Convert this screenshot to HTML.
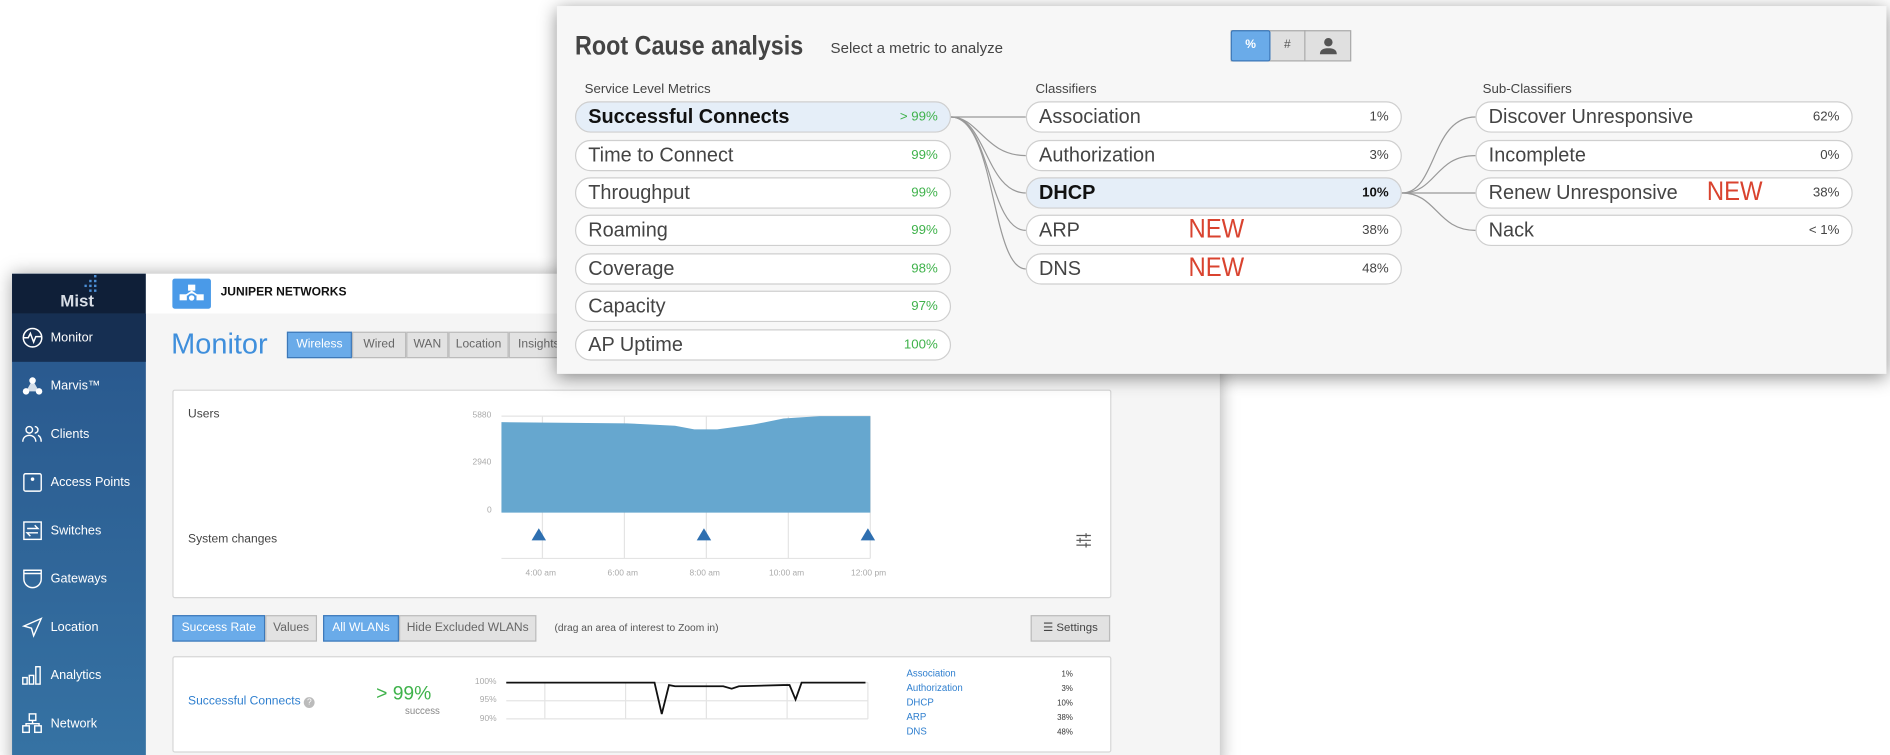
<!DOCTYPE html>
<html><head><meta charset="utf-8"><style>
*{box-sizing:border-box;margin:0;padding:0}
html,body{width:1890px;height:755px;overflow:hidden;background:#fff;font-family:"Liberation Sans","DejaVu Sans",sans-serif}
#w{position:absolute;left:0;top:0;width:1568px;height:626px;transform:scale(1.2054,1.2061);transform-origin:0 0;overflow:hidden}
.a{position:absolute}
#back{left:10px;top:227px;width:1002px;height:410px;background:#f5f5f5;box-shadow:0 0 14px rgba(0,0,0,.35)}
#side{left:0;top:0;width:111px;height:410px;background:linear-gradient(#27548a,#3673a4)}
.nav{position:absolute;left:0;width:111px;height:40px;color:#fff;font-size:10.5px;display:flex;align-items:center;padding-left:8px}
.nav svg{width:18px;height:18px;margin-right:6px;flex:none}
.tab{position:absolute;top:48px;height:22px;border:1px solid #bbb;background:#e2e2e2;color:#666;font-size:10px;line-height:20px;text-align:center}
.btn{position:absolute;height:22px;border:1px solid #bbb;background:#e2e2e2;color:#666;font-size:10px;line-height:20px;text-align:center}
.on{background:#6aabe9;color:#fff;border-color:#3d78b8}
.card{position:absolute;background:#fff;border:1px solid #d6d6d6;border-radius:2px}
.gl{font-size:7px;color:#aaa;position:absolute}
#pop{left:462px;top:5px;width:1103px;height:305px;background:#f7f7f7;box-shadow:0 3px 14px rgba(0,0,0,.45)}
.pill{position:absolute;height:26px;width:312px;border:1px solid #cfcfcf;border-radius:13px;background:#fff;font-size:16.5px;color:#444;line-height:24px;padding-left:10px}
.pill b{font-weight:bold;color:#111}
.pill span{position:absolute;right:10px;top:0;font-size:11px;color:#444}
.pill span.g{color:#3fb24b}
.hl{background:#e5eef8}
.new{position:absolute;color:#d9432f;font-size:22px;font-weight:normal;top:-1px;transform:scaleX(.9);transform-origin:0 0}
.hd{position:absolute;top:63px;font-size:11px;color:#444}
</style></head><body><div id="w">

<div class="a" id="back">
 <div class="a" id="side">
  <div class="a" style="left:0;top:0;width:111px;height:33px;background:#0f1f38"></div>
  <div class="a" style="left:0;top:33px;width:111px;height:40px;background:#162f52"></div>
  <div class="a" style="left:40px;top:14px;color:#d8dde5;font-weight:bold;font-size:14px">Mist</div>
  <svg class="a" style="left:60px;top:1px" width="12" height="18"><g fill="#4c8fd6"><rect x="8" y="0" width="2" height="2"/><rect x="8" y="4" width="2" height="2"/><rect x="4" y="4" width="2" height="2"/><rect x="8" y="8" width="2" height="2"/><rect x="4" y="8" width="2" height="2"/><rect x="0" y="8" width="2" height="2"/><rect x="8" y="12" width="2" height="2"/><rect x="4" y="12" width="2" height="2"/></g></svg>
  <div class="nav" style="top:33px"><svg viewBox="0 0 20 20" fill="none" stroke="#fff" stroke-width="1.4"><circle cx="10" cy="10" r="8.5"/><path d="M2 10h4l2-4 3 8 2-5h5"/></svg>Monitor</div>
  <div class="nav" style="top:73px"><svg viewBox="0 0 20 20" fill="#fff"><circle cx="10" cy="5" r="3"/><circle cx="4" cy="15" r="3"/><circle cx="16" cy="15" r="3"/><path d="M9 6l-5 9h12l-5-9z" opacity=".8"/></svg>Marvis™</div>
  <div class="nav" style="top:113px"><svg viewBox="0 0 20 20" fill="none" stroke="#fff" stroke-width="1.3"><circle cx="7" cy="6" r="3"/><path d="M1 17c0-4 3-6 6-6s6 2 6 6M12 3a3 3 0 010 6M15 11c2 1 3 3 3 6"/></svg>Clients</div>
  <div class="nav" style="top:153px"><svg viewBox="0 0 20 20" fill="none" stroke="#fff" stroke-width="1.3"><rect x="2" y="2" width="16" height="16" rx="1.5"/><circle cx="10" cy="7" r="1" fill="#fff"/></svg>Access Points</div>
  <div class="nav" style="top:193px"><svg viewBox="0 0 20 20" fill="none" stroke="#fff" stroke-width="1.3"><rect x="2" y="2" width="16" height="16"/><path d="M5 8h10l-3-3M15 12H5l3 3"/></svg>Switches</div>
  <div class="nav" style="top:233px"><svg viewBox="0 0 20 20" fill="none" stroke="#fff" stroke-width="1.3"><path d="M2 2h16v8c0 5-4 8-8 8s-8-3-8-8z M2 5h16"/></svg>Gateways</div>
  <div class="nav" style="top:273px"><svg viewBox="0 0 20 20" fill="none" stroke="#fff" stroke-width="1.3"><path d="M18 2L2 9l7 2 2 7z"/></svg>Location</div>
  <div class="nav" style="top:313px"><svg viewBox="0 0 20 20" fill="none" stroke="#fff" stroke-width="1.3"><rect x="1" y="12" width="4" height="6"/><rect x="7" y="10" width="4" height="8"/><rect x="13" y="2" width="4" height="16"/></svg>Analytics</div>
  <div class="nav" style="top:353px"><svg viewBox="0 0 20 20" fill="none" stroke="#fff" stroke-width="1.3"><rect x="7" y="1" width="6" height="6"/><rect x="1" y="12" width="6" height="6"/><rect x="12" y="12" width="6" height="6"/><path d="M10 7v3M4 12v-2h12v2"/></svg>Network</div>
 </div>
 <div class="a" style="left:111px;top:0;width:891px;height:33px;background:#fff"></div>
 <div class="a" style="left:133px;top:4px;width:32px;height:25px;background:#4a9ae8;border-radius:2px"></div>
 <svg class="a" style="left:137px;top:8px" width="24" height="18" viewBox="0 0 24 18" fill="#fff"><rect x="9" y="1" width="6" height="5"/><rect x="2" y="9" width="6" height="5"/><rect x="16" y="9" width="6" height="5"/><path d="M12 6l-6 4h12z"/><circle cx="12" cy="12" r="3" stroke="#4a9ae8" stroke-width="1.5"/></svg>
 <div class="a" style="left:173px;top:10px;font-size:10px;font-weight:bold;color:#111">JUNIPER NETWORKS</div>
 <div class="a" style="left:132px;top:45px;font-size:24px;color:#3f8fdc">Monitor</div>
 <div class="tab on" style="left:228px;width:54px">Wireless</div>
 <div class="tab" style="left:282px;width:45px">Wired</div>
 <div class="tab" style="left:327px;width:35px">WAN</div>
 <div class="tab" style="left:362px;width:50px">Location</div>
 <div class="tab" style="left:412px;width:50px">Insights</div>

 <div class="card" style="left:133px;top:96px;width:779px;height:173px"></div>
 <div class="a" style="left:146px;top:111px;font-size:10px;color:#444">Users</div>
 <div class="a" style="left:146px;top:215px;font-size:10px;color:#444">System changes</div>
 <div class="gl" style="left:382px;top:114px">5880</div>
 <div class="gl" style="left:382px;top:153px">2940</div>
 <div class="gl" style="left:394px;top:193px">0</div>
 <svg class="a" style="left:400px;top:110px" width="340" height="145">
  <g stroke="#e4e4e4" stroke-width="1"><line x1="6" y1="8" x2="312" y2="8"/><line x1="40" y1="8" x2="40" y2="126"/><line x1="108" y1="8" x2="108" y2="126"/><line x1="176" y1="8" x2="176" y2="126"/><line x1="244" y1="8" x2="244" y2="126"/><line x1="312" y1="8" x2="312" y2="126"/><line x1="6" y1="126" x2="312" y2="126"/></g>
  <path d="M6 13 L110 14 L150 16 L166 19 L185 19 L215 15 L240 10 L270 8 L312 8 L312 88 L6 88Z" fill="#66a7cf"/>
  <g fill="#2e6fb0"><path d="M37 101l-6 10h12z"/><path d="M174 101l-6 10h12z"/><path d="M310 101l-6 10h12z"/></g>
  <g font-size="7" fill="#aaa" font-family="Liberation Sans"><text x="26" y="140">4:00 am</text><text x="94" y="140">6:00 am</text><text x="162" y="140">8:00 am</text><text x="228" y="140">10:00 am</text><text x="296" y="140">12:00 pm</text></g>
 </svg>
 <svg class="a" style="left:882px;top:215px" width="14" height="12" stroke="#555" stroke-width="1"><path d="M1 2h12M1 6h12M1 10h12"/><path d="M9 0v4M4 4v4M9 8v4"/></svg>

 <div class="btn on" style="left:133px;top:283px;width:77px">Success Rate</div>
 <div class="btn" style="left:210px;top:283px;width:43px">Values</div>
 <div class="btn on" style="left:258px;top:283px;width:63px">All WLANs</div>
 <div class="btn" style="left:321px;top:283px;width:114px">Hide Excluded WLANs</div>
 <div class="a" style="left:450px;top:288px;font-size:8.5px;color:#555">(drag an area of interest to Zoom in)</div>
 <div class="btn" style="left:845px;top:283px;width:66px;font-size:9.5px;color:#444">☰ Settings</div>

 <div class="card" style="left:133px;top:317px;width:779px;height:80px"></div>
 <div class="a" style="left:146px;top:349px;font-size:10px;color:#2f7fcf">Successful Connects <span style="display:inline-block;width:9px;height:9px;border-radius:50%;background:#bbb;color:#fff;font-size:7px;text-align:center;line-height:9px">?</span></div>
 <div class="a" style="left:302px;top:340px;font-size:16px;color:#3fb24b">&gt; 99%</div>
 <div class="a" style="left:326px;top:358px;font-size:8px;color:#888">success</div>
 <div class="gl" style="left:384px;top:335px">100%</div>
 <div class="gl" style="left:388px;top:350px">95%</div>
 <div class="gl" style="left:388px;top:366px">90%</div>
 <svg class="a" style="left:400px;top:330px" width="320" height="50">
  <g stroke="#e4e4e4"><line x1="10" y1="9" x2="310" y2="9"/><line x1="10" y1="24" x2="310" y2="24"/><line x1="10" y1="39" x2="310" y2="39"/><line x1="42" y1="9" x2="42" y2="39"/><line x1="109" y1="9" x2="109" y2="39"/><line x1="176" y1="9" x2="176" y2="39"/><line x1="243" y1="9" x2="243" y2="39"/><line x1="310" y1="9" x2="310" y2="39"/></g>
  <path d="M10 9 L133 9 L139 35 L145 11 L150 12 L190 12 L197 14 L203 12 L240 11 L245 11 L250 23 L255 9 L308 9" fill="none" stroke="#111" stroke-width="1.5"/>
 </svg>
 <div class="a" style="left:742px;top:326px;font-size:8px;color:#2f7fcf;line-height:12px">Association<br>Authorization<br>DHCP<br>ARP<br>DNS</div>
 <div class="a" style="left:862px;top:327px;font-size:6.5px;color:#333;line-height:12px;text-align:right;width:18px">1%<br>3%<br>10%<br>38%<br>48%</div>
</div>

<div class="a" id="pop">
 <div class="a" style="left:15px;top:20px;font-size:22px;font-weight:bold;color:#444;transform:scaleX(.88);transform-origin:0 0;white-space:nowrap">Root Cause analysis</div>
 <div class="a" style="left:227px;top:28px;font-size:12.5px;color:#444">Select a metric to analyze</div>
 <div class="a" style="left:559px;top:20px;width:100px;height:26px;border:1px solid #aaa;background:#e0e0e0"></div>
 <div class="a" style="left:559px;top:20px;width:33px;height:26px;background:#6aabe9;border:1px solid #3d78b8;border-radius:2px;color:#fff;font-size:10px;text-align:center;line-height:24px;font-weight:bold">%</div>
 <div class="a" style="left:592px;top:20px;width:29px;height:26px;border-right:1px solid #aaa;color:#555;font-size:10px;text-align:center;line-height:26px">#</div>
 <svg class="a" style="left:632px;top:25px" width="16" height="16" fill="#555"><circle cx="8" cy="5" r="3.5"/><path d="M1 15c0-4 3-5 7-5s7 1 7 5z"/></svg>
 <div class="hd" style="left:23px">Service Level Metrics</div>
 <div class="hd" style="left:397px">Classifiers</div>
 <div class="hd" style="left:768px">Sub-Classifiers</div>
 <svg class="a" style="left:0;top:0" width="1103" height="305" fill="none" stroke="#999" stroke-width="1">
  <path d="M327 92 H389"/><path d="M327 92 C350 92 355 124 389 124"/><path d="M327 92 C356 92 356 155 389 155"/><path d="M327 92 C360 92 358 186 389 186"/><path d="M327 92 C364 92 360 218 389 218"/>
  <path d="M701 155 C730 155 725 92 762 92"/><path d="M701 155 C730 155 728 124 762 124"/><path d="M701 155 H762"/><path d="M701 155 C730 155 730 186 762 186"/>
 </svg>
 <div class="pill hl" style="left:15px;top:79px"><b>Successful Connects</b><span class="g">&gt; 99%</span></div>
 <div class="pill" style="left:15px;top:111px">Time to Connect<span class="g">99%</span></div>
 <div class="pill" style="left:15px;top:142px">Throughput<span class="g">99%</span></div>
 <div class="pill" style="left:15px;top:173px">Roaming<span class="g">99%</span></div>
 <div class="pill" style="left:15px;top:205px">Coverage<span class="g">98%</span></div>
 <div class="pill" style="left:15px;top:236px">Capacity<span class="g">97%</span></div>
 <div class="pill" style="left:15px;top:268px">AP Uptime<span class="g">100%</span></div>
 <div class="pill" style="left:389px;top:79px">Association<span>1%</span></div>
 <div class="pill" style="left:389px;top:111px">Authorization<span>3%</span></div>
 <div class="pill hl" style="left:389px;top:142px"><b>DHCP</b><span style="font-weight:bold;color:#111">10%</span></div>
 <div class="pill" style="left:389px;top:173px">ARP<div class="new" style="left:134px">NEW</div><span>38%</span></div>
 <div class="pill" style="left:389px;top:205px">DNS<div class="new" style="left:134px">NEW</div><span>48%</span></div>
 <div class="pill" style="left:762px;top:79px;width:313px">Discover Unresponsive<span>62%</span></div>
 <div class="pill" style="left:762px;top:111px;width:313px">Incomplete<span>0%</span></div>
 <div class="pill" style="left:762px;top:142px;width:313px">Renew Unresponsive<div class="new" style="left:191px">NEW</div><span>38%</span></div>
 <div class="pill" style="left:762px;top:173px;width:313px">Nack<span>&lt; 1%</span></div>
</div>
</div></body></html>
